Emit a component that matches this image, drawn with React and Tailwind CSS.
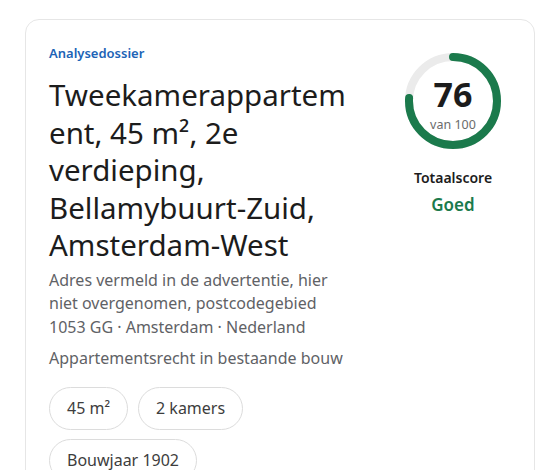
import React from "react";

function Ring({ value }) {
  const r = 44;
  const c = 2 * Math.PI * r;
  const off = c * (1 - value / 100);
  return (
    <div className="relative w-[96px] h-[96px]">
      <svg width="96" height="96" viewBox="0 0 96 96" className="-rotate-90">
        <circle cx="48" cy="48" r={r} fill="none" stroke="#ebebeb" strokeWidth="8" />
        <circle
          cx="48"
          cy="48"
          r={r}
          fill="none"
          stroke="#1b7a4c"
          strokeWidth="8"
          strokeLinecap="round"
          strokeDasharray={c}
          strokeDashoffset={off}
        />
      </svg>
      <div className="absolute inset-0 flex flex-col items-center pt-[24px]">
        <span className="text-[34px] leading-[34px] font-bold text-[#1c1c1c]">{value}</span>
        <span className="mt-[6px] text-[12.5px] leading-[16px] text-[#6b6b6b]">van 100</span>
      </div>
    </div>
  );
}

function Chip({ children }) {
  return (
    <span className="inline-flex items-center h-[43px] px-[17px] rounded-full border border-[#dcdcdc] text-[16px] text-[#3d3d3d]">
      {children}
    </span>
  );
}

export default function App() {
  return (
    <div className="bg-white pt-[19px] px-[25px] font-['Noto_Sans',sans-serif] overflow-hidden h-[470px]">
      <div className="rounded-[14px] border border-[#e6e6e6] bg-white px-[23px] pt-[23px] pb-6 flex gap-[38px]">
        <div className="w-[308px] shrink-0">
          <div className="text-[13px] leading-[20px] font-semibold text-[#2063b6]">Analysedossier</div>
          <h1 className="mt-[13px] text-[29.5px] leading-[37.5px] text-[#1c1c1c] [overflow-wrap:anywhere]">
            Tweekamerappartement, 45 m², 2e verdieping, Bellamybuurt-Zuid, Amsterdam-West
          </h1>
          <p className="mt-[5px] text-[16px] leading-[23.5px] text-[#5f6266]">
            Adres vermeld in de advertentie, hier niet overgenomen, postcodegebied 1053 GG · Amsterdam · Nederland
          </p>
          <p className="mt-[8px] text-[16px] leading-[23.5px] text-[#5f6266]">
            Appartementsrecht in bestaande bouw
          </p>
          <div className="mt-[16px] flex flex-wrap gap-x-[10px] gap-y-[9px] max-w-[230px]">
            <Chip>45 m²</Chip>
            <Chip>2 kamers</Chip>
            <Chip>Bouwjaar 1902</Chip>
          </div>
        </div>
        <div className="flex-1 flex flex-col items-center pt-[10px]">
          <Ring value={76} />
          <div className="mt-[20px] text-[14px] leading-[18px] font-semibold text-[#1c1c1c]">Totaalscore</div>
          <div className="mt-[7px] text-[17px] leading-[22px] font-semibold text-[#1b7a4c]">Goed</div>
        </div>
      </div>
    </div>
  );
}
